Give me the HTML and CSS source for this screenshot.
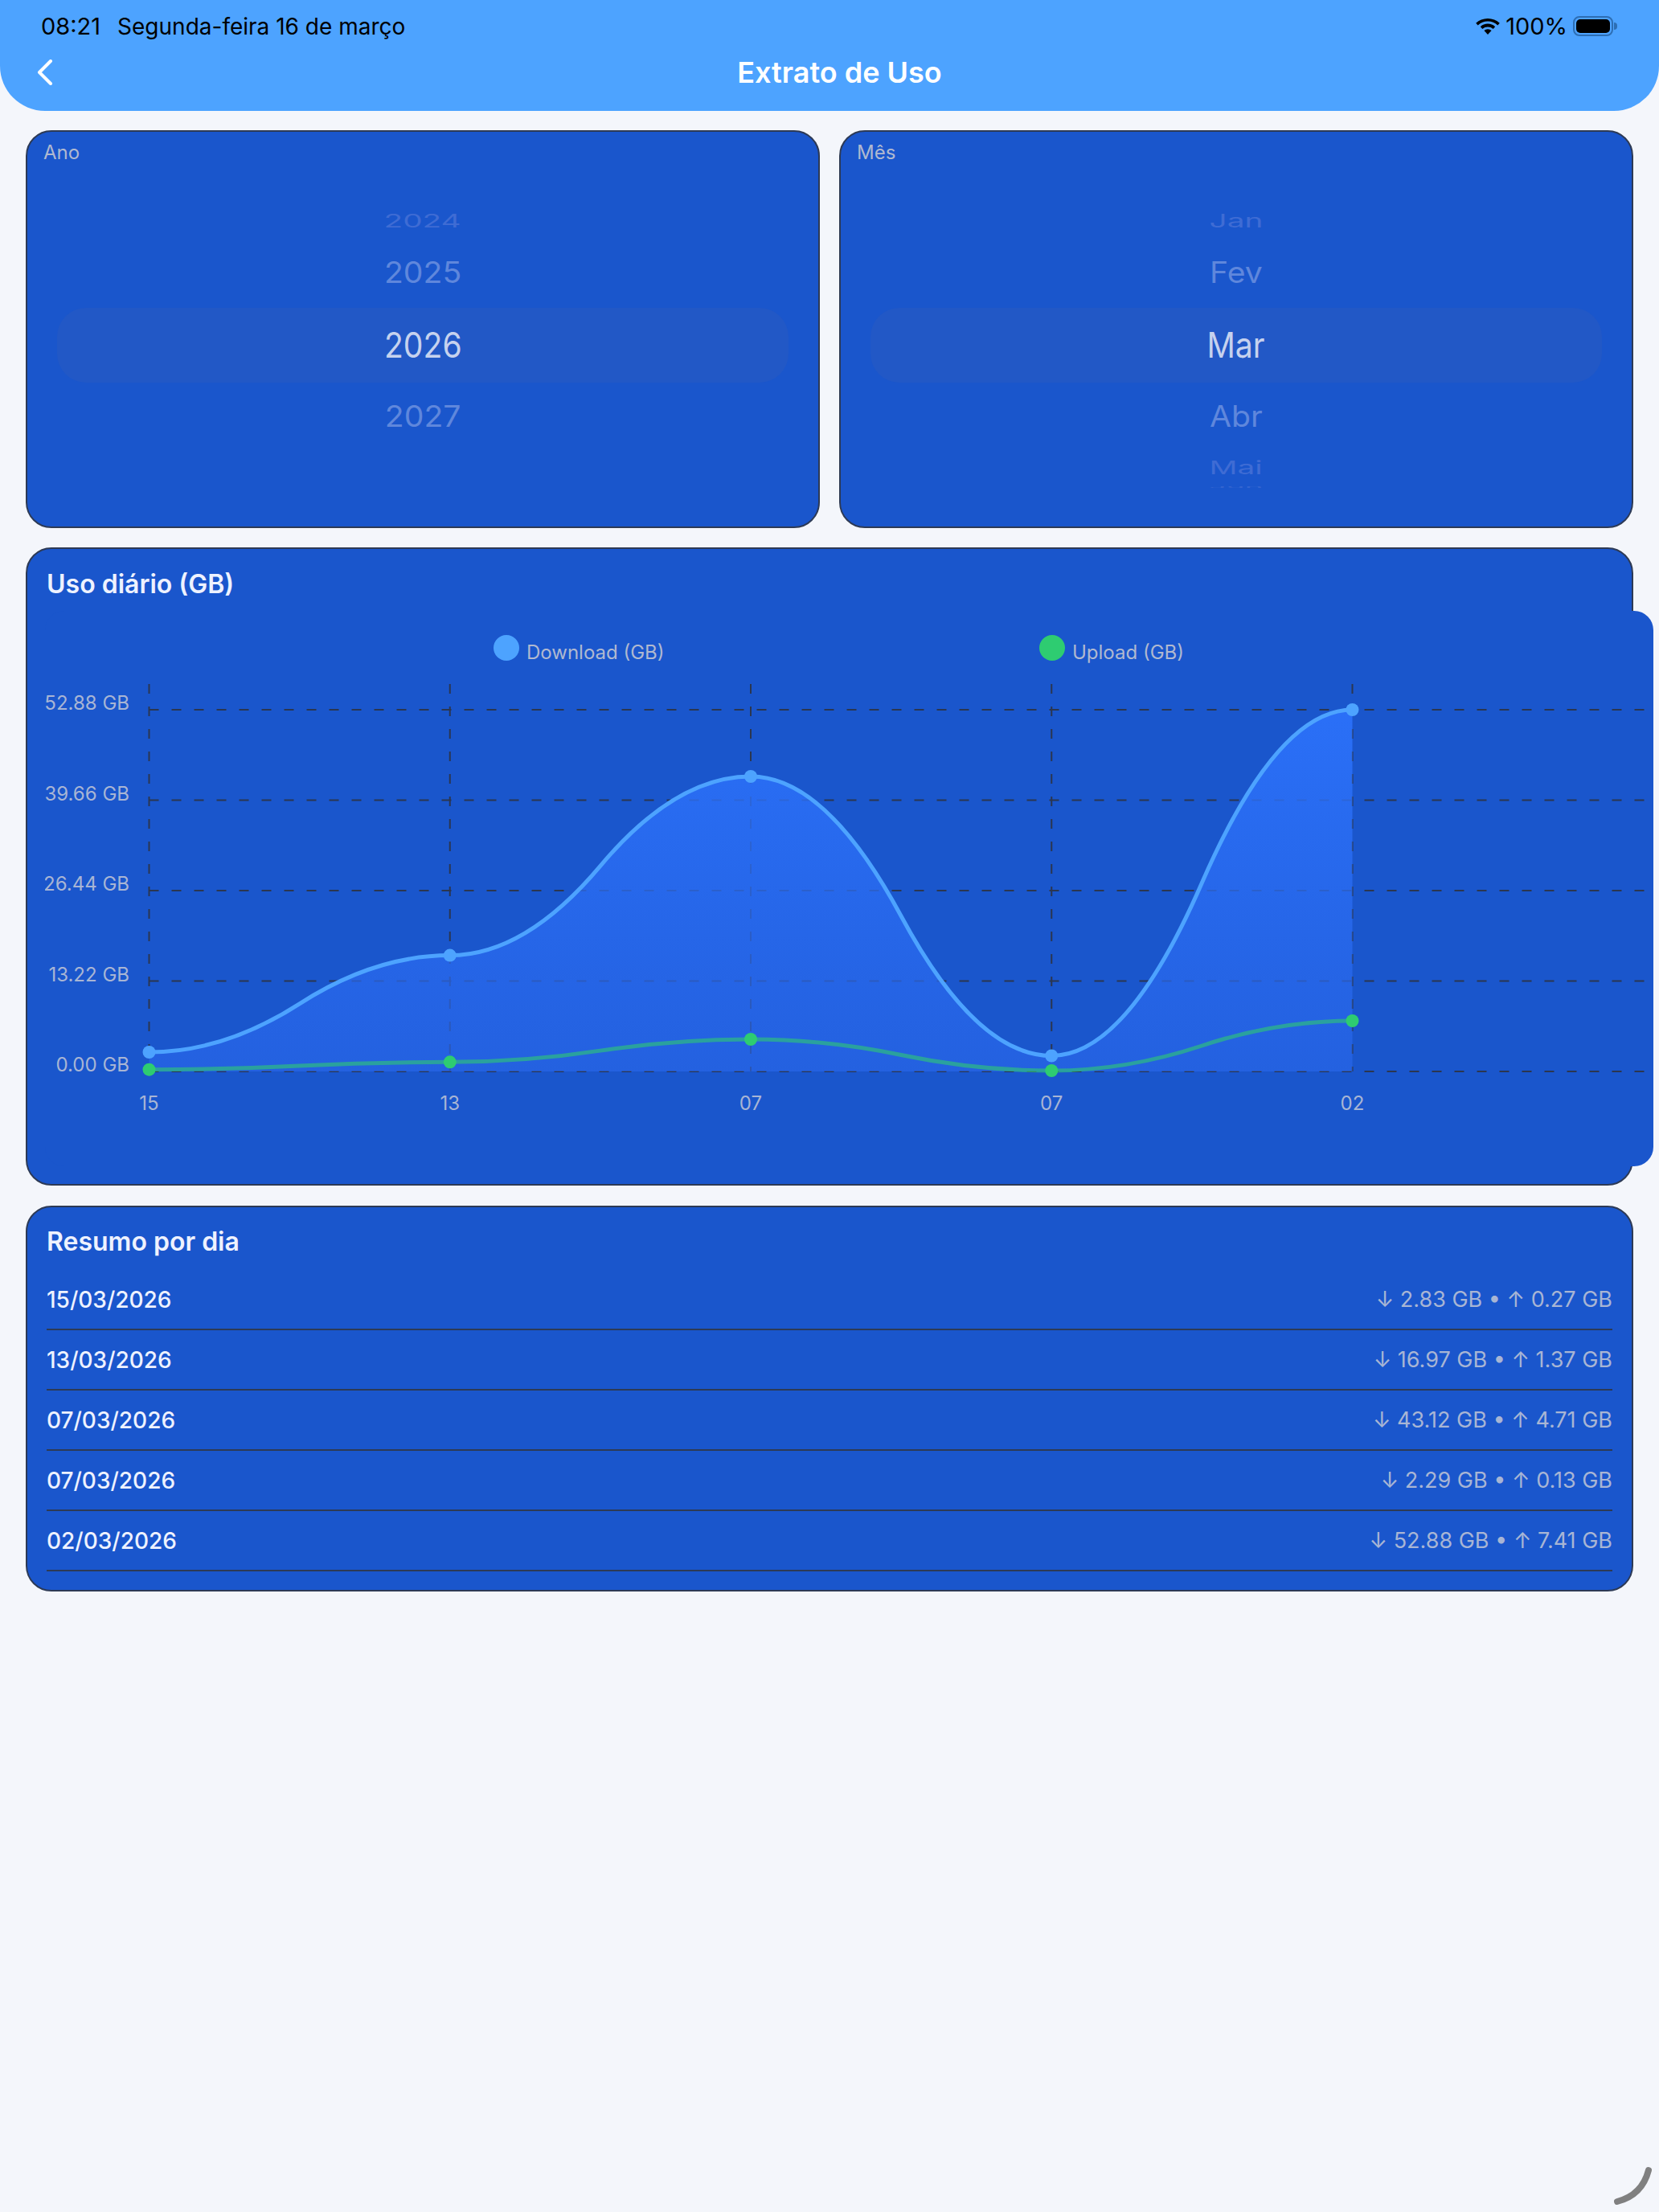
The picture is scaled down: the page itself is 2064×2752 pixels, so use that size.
FILE: index.html
```html
<!DOCTYPE html>
<html lang="pt-BR">
<head>
  <meta charset="UTF-8" />
  <title>Extrato de Uso</title>
  <link rel="stylesheet" href="styles.css">
</head>
<body>
  <header class="top">
    <div class="status">
      <span class="time">08:21</span>
      <span class="date">Segunda-feira 16 de março</span>
      <span class="status-right">
        <svg class="wifi" width="30" height="20" viewBox="0 0 30 20">
          <path d="M15 20l-4.6-5a6.8 6.8 0 0 1 9.2 0z" />
          <path d="M15 6.6c3.5 0 6.8 1.400 9.200 3.600l-2.500 2.700a10.400 10.400 0 0 0-13.400 0l-2.500-2.700C8.200 8 11.500 6.600 15 6.600z" />
          <path d="M15 0c5.700 0 10.900 2.200 14.800 5.700l-2.500 2.700A18.200 18.200 0 0 0 15 3.600 18.200 18.200 0 0 0 2.700 8.400L.2 5.700C4.100 2.200 9.300 0 15 0z" />
        </svg>
        <span class="pct">100%</span>
        <span class="battery"><span class="battery-fill"></span></span>
      </span>
    </div>
    <div class="nav">
      <svg class="back" width="20" height="32" viewBox="0 0 20 32">
        <path d="M17 2L3 16l14 14" />
      </svg>
      <h1>Extrato de Uso</h1>
    </div>
  </header>

  <main class="container">
    <div class="pickers">
      <section class="card picker">
        <div class="picker-label">Ano</div>
        <div class="wheel">
          <div class="row far"><span>2024</span></div>
          <div class="row near"><span>2025</span></div>
          <div class="row selected"><span>2026</span></div>
          <div class="row near"><span>2027</span></div>
        </div>
      </section>
      <section class="card picker">
        <div class="picker-label">Mês</div>
        <div class="wheel">
          <div class="row far"><span>Jan</span></div>
          <div class="row near"><span>Fev</span></div>
          <div class="row selected"><span>Mar</span></div>
          <div class="row near"><span>Abr</span></div>
          <div class="row far"><span>Mai</span></div>
          <div class="row edge"><span>Jun</span></div>
        </div>
      </section>
    </div>

    <section class="card chart-card">
      <h2>Uso diário (GB)</h2>
      <div class="chart-scroll">
        <svg class="chart" width="2001" height="691" viewBox="55 760 2001 691">
          <defs>
            <linearGradient id="areaFill" x1="0" y1="0" x2="0" y2="1">
              <stop offset="0" stop-color="#2d74ff" stop-opacity="0.85" />
              <stop offset="1" stop-color="#2967eb" stop-opacity="0.65" />
            </linearGradient>
          </defs>

          <!-- legenda -->
          <circle class="dl-dot" cx="629" cy="806" r="16" />
          <text class="legend" x="654" y="820">Download (GB)</text>
          <circle class="ul-dot" cx="1308" cy="806" r="16" />
          <text class="legend" x="1333" y="820">Upload (GB)</text>

          <!-- grade -->
          <g class="grid">
            <line x1="184.500" y1="851" x2="184.500" y2="1333" />
            <line x1="558.750" y1="851" x2="558.750" y2="1333" />
            <line x1="933" y1="851" x2="933" y2="1333" />
            <line x1="1307.250" y1="851" x2="1307.250" y2="1333" />
            <line x1="1681.500" y1="851" x2="1681.500" y2="1333" />
            <line x1="184.500" y1="883" x2="2046" y2="883" />
            <line x1="184.500" y1="995.500" x2="2046" y2="995.500" />
            <line x1="184.500" y1="1108" x2="2046" y2="1108" />
            <line x1="184.500" y1="1220.500" x2="2046" y2="1220.500" />
            <line x1="184.500" y1="1333" x2="2046" y2="1333" />
          </g>

          <!-- eixos -->
          <g class="axis y-axis">
            <text x="160" y="883">52.88 GB</text>
            <text x="160" y="995.500">39.66 GB</text>
            <text x="160" y="1108">26.44 GB</text>
            <text x="160" y="1220.500">13.22 GB</text>
            <text x="160" y="1333">0.00 GB</text>
          </g>
          <g class="axis x-axis">
            <text x="184.500" y="1381">15</text>
            <text x="558.750" y="1381">13</text>
            <text x="933" y="1381">07</text>
            <text x="1307.250" y="1381">07</text>
            <text x="1681.500" y="1381">02</text>
          </g>

          <!-- download -->
          <path fill="url(#areaFill)" d="M184.500 1309 Q278.060 1309 371.630 1248.800 Q465.190 1188.600 558.750 1188.600 Q652.310 1188.600 745.880 1077.300 Q839.440 966 933 966 Q1026.560 966 1120.130 1139.750 Q1213.690 1313.500 1307.250 1313.500 Q1400.810 1313.500 1494.380 1098.250 Q1587.940 883 1681.500 883 L1681.500 1333 L184.500 1333 Z" />
          <path class="line dl-line" d="M184.500 1309 Q278.060 1309 371.630 1248.800 Q465.190 1188.600 558.750 1188.600 Q652.310 1188.600 745.880 1077.300 Q839.440 966 933 966 Q1026.560 966 1120.130 1139.750 Q1213.690 1313.500 1307.250 1313.500 Q1400.810 1313.500 1494.380 1098.250 Q1587.940 883 1681.500 883" />

          <!-- upload -->
          <path class="line ul-line" d="M184.500 1330.700 Q278.060 1330.700 371.630 1326 Q465.190 1321.300 558.750 1321.300 Q652.310 1321.300 745.880 1307.150 Q839.440 1293 933 1293 Q1026.560 1293 1120.130 1312.500 Q1213.690 1332 1307.250 1332 Q1400.810 1332 1494.380 1301 Q1587.940 1270 1681.500 1270" />

          <g class="dl-dot">
            <circle cx="184.500" cy="1309" r="8" />
            <circle cx="558.750" cy="1188.600" r="8" />
            <circle cx="933" cy="966" r="8" />
            <circle cx="1307.250" cy="1313.500" r="8" />
            <circle cx="1681.500" cy="883" r="8" />
          </g>
          <g class="ul-dot">
            <circle cx="184.500" cy="1330.700" r="8" />
            <circle cx="558.750" cy="1321.300" r="8" />
            <circle cx="933" cy="1293" r="8" />
            <circle cx="1307.250" cy="1332" r="8" />
            <circle cx="1681.500" cy="1270" r="8" />
          </g>
        </svg>
      </div>
    </section>

    <section class="card summary">
      <h2>Resumo por dia</h2>
      <div class="day"><span class="day-date">15/03/2026</span><span class="day-usage">↓ 2.83 GB • ↑ 0.27 GB</span></div>
      <div class="day"><span class="day-date">13/03/2026</span><span class="day-usage">↓ 16.97 GB • ↑ 1.37 GB</span></div>
      <div class="day"><span class="day-date">07/03/2026</span><span class="day-usage">↓ 43.12 GB • ↑ 4.71 GB</span></div>
      <div class="day"><span class="day-date">07/03/2026</span><span class="day-usage">↓ 2.29 GB • ↑ 0.13 GB</span></div>
      <div class="day"><span class="day-date">02/03/2026</span><span class="day-usage">↓ 52.88 GB • ↑ 7.41 GB</span></div>
    </section>
  </main>

  <svg class="corner" width="60" height="60" viewBox="0 0 60 60">
    <path d="M12 51 Q43 43 51 12" />
  </svg>
</body>
</html>
```

FILE: styles.css
```css
* {
  box-sizing: border-box;
}
html, body {
  height: 100%;
}
body {
  margin: 0;
  background-color: #f4f6fb;
  font-family: Inter, "Noto Sans", sans-serif;
  overflow: hidden;
}

/* topo */
.top {
  height: 138px;
  background-color: #4da3ff;
  border-radius: 0 0 56px 56px;
}
.status {
  display: flex;
  align-items: center;
  height: 65px;
  padding: 0 57px 0 51px;
  color: #000;
  font-size: 29px;
  gap: 21px;
}
.date {
  font-size: 28px;
}
.status-right {
  margin-left: auto;
  display: flex;
  align-items: center;
}
.wifi {
  fill: #000;
  margin-right: 7px;
}
.battery {
  position: relative;
  display: block;
  width: 50px;
  height: 25px;
  margin-left: 7px;
  padding: 2px;
  border: 2px solid #2d6eb4;
  border-radius: 8px;
}
.battery::after {
  content: "";
  position: absolute;
  right: -7px;
  top: 6px;
  width: 4px;
  height: 9px;
  background-color: #2d6eb4;
  border-radius: 0 4px 4px 0;
}
.battery-fill {
  display: block;
  height: 100%;
  background-color: #000;
  border-radius: 5px;
}
.nav {
  display: flex;
  align-items: center;
  height: 50px;
  padding: 0 41px 0 46px;
}
.back {
  flex: none;
  fill: none;
  stroke: #fff;
  stroke-width: 4;
  stroke-linecap: round;
  stroke-linejoin: round;
}
.nav h1 {
  flex: 1;
  margin: 0;
  color: #fff;
  font-size: 36px;
  font-weight: 600;
  text-align: center;
}

/* cards */
.container {
  padding: 24px 32px 0;
}
.card {
  background-color: #1a56cc;
  border: 2px solid #2d3a55;
  border-radius: 32px;
}
.card h2 {
  margin: 0;
  color: #eef2ff;
  font-size: 32px;
  font-weight: 600;
}

/* seletores */
.pickers {
  display: grid;
  grid-template-columns: 1fr 1fr;
  gap: 24px;
}
.picker {
  height: 495px;
  padding: 0 37px;
}
.picker-label {
  height: 91px;
  margin: 0 -17px;
  padding-top: 11px;
  color: #b0b9d0;
  font-size: 24px;
}
.row {
  display: flex;
  align-items: center;
  justify-content: center;
  color: #5f87dc;
  font-size: 44px;
}
.row span {
  display: block;
  transform: translateY(-1px) scaleX(0.89);
}
.row.far {
  height: 42px;
  color: #3f6cd4;
}
.row.far span {
  transform: translateY(-1px) scale(0.88, 0.52);
}
.row.near {
  height: 86px;
}
.row.near span {
  transform: translateY(-1px) scale(0.89, 0.84);
}
.row.selected {
  height: 93px;
  color: #c6d2ee;
  background-color: #2258c6;
  border-radius: 36px;
}
.row.edge {
  height: 4px;
  color: #3465d0;
}
.row.edge span {
  transform: scale(0.88, 0.06);
}

/* grafico */
.chart-card {
  height: 794px;
  margin-top: 24px;
  padding: 24px 24px 0;
}
.chart-card h2 {
  height: 53px;
}
.chart-scroll {
  width: 2001px;
  height: 691px;
  margin-left: -2px;
  background-color: #1a56cc;
  border-radius: 24px;
  overflow: hidden;
}
.chart {
  display: block;
}
.grid line {
  stroke: #2b3650;
  stroke-width: 2;
  stroke-dasharray: 12 16;
}
.legend {
  fill: #b0b9d0;
  font-size: 24px;
}
.axis text {
  fill: #a8b5d4;
  font-size: 24px;
}
.y-axis text {
  text-anchor: end;
}
.x-axis text {
  text-anchor: middle;
}
.line {
  fill: none;
  stroke-width: 5;
}
.dl-line {
  stroke: #4da3ff;
}
.ul-line {
  stroke: #2ecc71;
  stroke-opacity: 0.6;
}
.dl-dot {
  fill: #4da3ff;
}
.ul-dot {
  fill: #2ecc71;
}

/* resumo */
.summary {
  height: 480px;
  margin-top: 25px;
  padding: 23px 24px 0;
}
.summary h2 {
  height: 55px;
}
.day {
  display: flex;
  align-items: center;
  justify-content: space-between;
  height: 75px;
  border-bottom: 2px solid #2d3a55;
}
.day-date {
  color: #eef2ff;
  font-size: 28px;
  font-weight: 500;
}
.day-usage {
  color: #a8b5d4;
  font-size: 27px;
}

/* indicador do canto */
.corner {
  position: fixed;
  right: 4px;
  bottom: 4px;
  fill: none;
  stroke: #808080;
  stroke-width: 8;
  stroke-linecap: round;
}
```
